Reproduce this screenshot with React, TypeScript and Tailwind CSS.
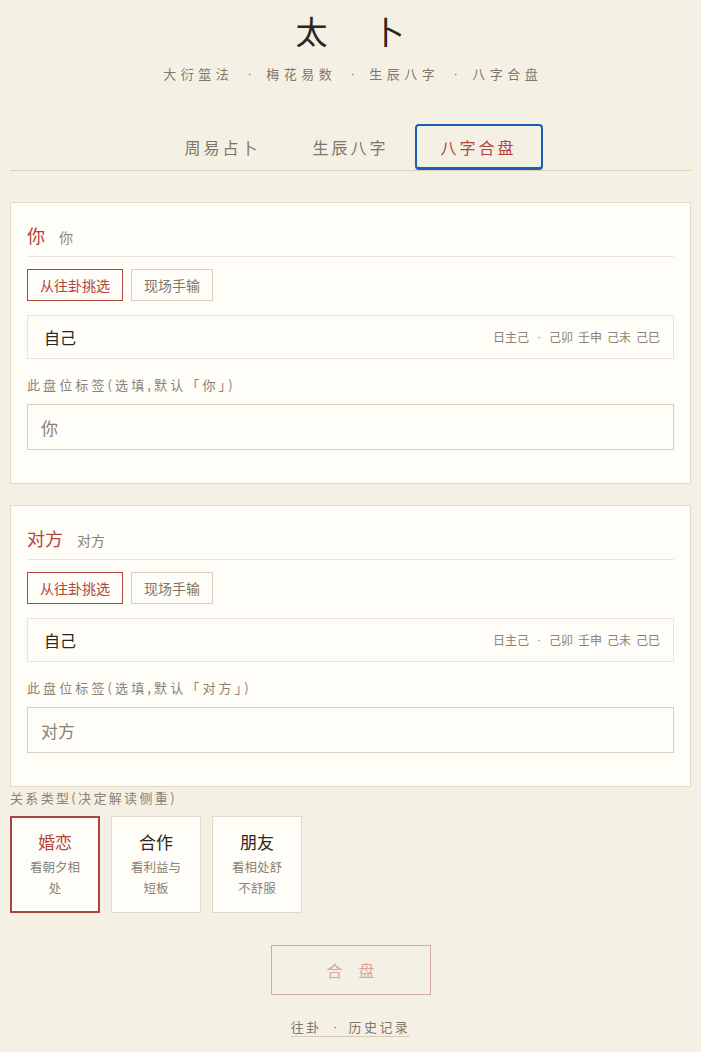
const FONT = "font-['Noto_Sans_CJK_SC','Noto_Sans',sans-serif]";
const DOT_FONT = "font-['Liberation_Sans',sans-serif]";

type Person = {
  title: string;
  note: string;
  placeholder: string;
};

const people: Person[] = [
  { title: "你", note: "你", placeholder: "你" },
  { title: "对方", note: "对方", placeholder: "对方" },
];

const relations = [
  { name: "婚恋", desc: "看朝夕相处", active: true },
  { name: "合作", desc: "看利益与短板", active: false },
  { name: "朋友", desc: "看相处舒不舒服", active: false },
];

const methods = ["大衍筮法", "梅花易数", "生辰八字", "八字合盘"];
const pillars = ["己卯", "壬申", "己未", "己巳"];

function Dot({ className }: { className: string }) {
  return <span className={`${DOT_FONT} text-center ${className}`}>·</span>;
}

function PersonCard({ person }: { person: Person }) {
  return (
    <section className="border border-[#e3d9c8] bg-[#fffdf7] px-4 pb-[33px] pt-[19px]">
      <div className="flex items-baseline gap-[14px] border-b border-[#ece4d6] pb-[8px]">
        <span className="text-[18px] leading-[26px] text-[#b0453c]">{person.title}</span>
        <span className="text-[14px] text-[#8a8274]">{person.note}</span>
      </div>

      <div className="mt-3 flex gap-2">
        <button
          type="button"
          className="h-8 w-24 border border-[#a9453b] bg-[#fffdf7] text-[14px] text-[#b0453c]"
        >
          从往卦挑选
        </button>
        <button
          type="button"
          className="h-8 w-[82px] border border-[#d9cfbf] bg-[#fffdf7] text-[14px] text-[#7d766a]"
        >
          现场手输
        </button>
      </div>

      <div className="mt-[14px] flex h-11 items-center justify-between border border-[#ece4d6] bg-[#fffdf8] pl-[16px] pr-[13px]">
        <span className="text-[16px] text-[#2b2721]">自己</span>
        <span className="flex items-center text-[12px] text-[#8a8274]">
          <span>日主己</span>
          <Dot className="w-[20px]" />
          <span className="flex gap-[5px]">
            {pillars.map((p) => (
              <span key={p}>{p}</span>
            ))}
          </span>
        </span>
      </div>

      <div className="mt-[16px] text-[13px] leading-5 tracking-[0.24em] text-[#8a8274]">
        此盘位标签(选填,默认「{person.placeholder}」)
      </div>

      <input
        className="mt-[9px] h-[46px] w-full border border-[#d9cfbf] bg-[#fffdf8] px-[13px] text-[17px] text-[#2b2721] outline-none placeholder:text-[#8a8274]"
        placeholder={person.placeholder}
      />
    </section>
  );
}

export default function App() {
  return (
    <div className={`${FONT} min-h-[1052px] bg-[#f5f0e4] px-[10px] text-[#2b2721]`}>
      <header className="pt-[8px] text-center">
        <h1 className="pl-[44px] text-[32px] font-normal leading-[44px] tracking-[45px] text-[#2a2621]">
          太卜
        </h1>
        <p className="mt-[12px] flex justify-center pl-[4.5px] text-[13px] leading-5 text-[#7f786b]">
          {methods.map((m, i) => (
            <span key={m} className="flex">
              {i > 0 && <Dot className="w-[33px]" />}
              <span className="tracking-[4.5px]">{m}</span>
            </span>
          ))}
        </p>
      </header>

      <nav className="mt-[40px] flex justify-center border-b border-[#ddd1bd]">
        <button type="button" className="h-[46px] w-32 text-[16px] tracking-[3px] text-[#7d766a]">
          周易占卜
        </button>
        <button type="button" className="h-[46px] w-32 text-[16px] tracking-[3px] text-[#7d766a]">
          生辰八字
        </button>
        <button
          type="button"
          className="mb-[-1px] h-[46px] w-32 rounded-[4px] border-2 border-b-[3px] border-[#1b5fb0] text-[16px] tracking-[3px] text-[#b0453c]"
        >
          八字合盘
        </button>
      </nav>

      <main className="mt-[31px] flex flex-col gap-[21px]">
        {people.map((person) => (
          <PersonCard key={person.title} person={person} />
        ))}
      </main>

      <div className="mt-[1px] text-[13px] leading-5 tracking-[0.18em] text-[#8a8274]">关系类型(决定解读侧重)</div>

      <div className="mt-[8px] flex gap-[11px]">
        {relations.map((item) => (
          <div
            key={item.name}
            className={
              item.active
                ? "flex h-[97px] w-[90px] flex-col items-center border-2 border-[#a9453b] bg-[#fffdf7] px-[16px] pt-[12px]"
                : "flex h-[97px] w-[90px] flex-col items-center border border-[#e3d9c8] bg-[#fffdf7] px-[17px] pt-[13px]"
            }
          >
            <span className={item.active ? "text-[17px] leading-6 text-[#b0453c]" : "text-[17px] leading-6 text-[#2b2721]"}>
              {item.name}
            </span>
            <span className="mt-[3px] text-center text-[12.5px] leading-[20.5px] text-[#8a8274]">{item.desc}</span>
          </div>
        ))}
      </div>

      <div className="mt-[32px] flex justify-center">
        <button
          type="button"
          className="h-[50px] w-40 border border-[#daa79c] pl-[16px] text-[16px] tracking-[16px] text-[#d9a598]"
        >
          合盘
        </button>
      </div>

      <div className="mt-[23px] flex justify-center">
        <a className="flex border-b border-[#d8cbb5] text-[13px] leading-[18px] text-[#7f786b]">
          <span className="tracking-[2.4px]">往卦</span>
          <Dot className="w-[27px]" />
          <span className="tracking-[2.4px]">历史记录</span>
        </a>
      </div>
    </div>
  );
}
